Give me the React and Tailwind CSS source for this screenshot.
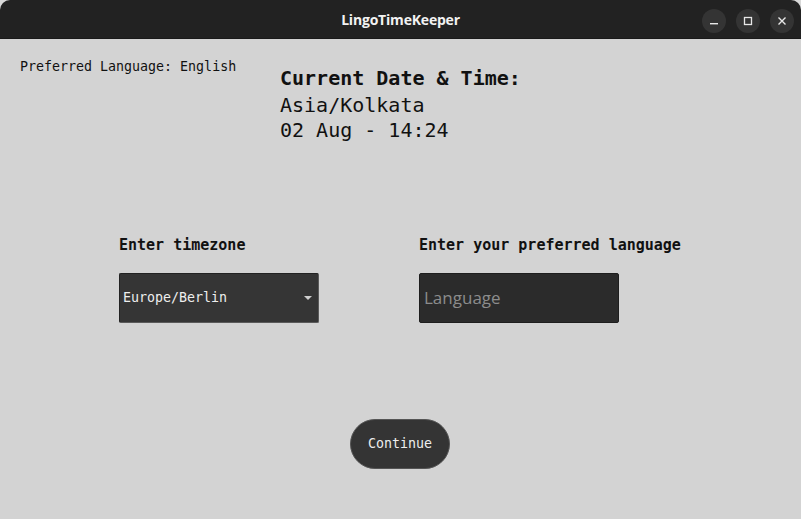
import React from "react";

const mono = { fontFamily: '"DejaVu Sans Mono", "Liberation Mono", monospace' };

const WinButton = ({ children }) => (
  <div className="w-6 h-6 rounded-full bg-[#343434] flex items-center justify-center">
    {children}
  </div>
);

const App = () => {
  return (
    <div className="w-[801px] h-[519px] bg-[#d8d8d8] overflow-hidden">
      <div className="w-full h-full flex flex-col rounded-t-[10px] overflow-hidden bg-[#d3d3d3]">
        {/* title bar */}
        <div className="h-[39px] shrink-0 bg-[#222222] relative flex items-center justify-center border-b border-[#1a1a1a]">
          <span
            className="text-[14px] font-bold text-[#f2f2f2] tracking-[-0.2px]"
            style={{ fontFamily: '"Open Sans", "DejaVu Sans", sans-serif' }}
          >
            LingoTimeKeeper
          </span>
          <div className="absolute right-[7px] top-[9px] flex gap-[10px]">
            <WinButton>
              <svg width="10" height="10" viewBox="0 0 10 10">
                <rect x="1" y="7" width="8" height="1.4" fill="#e8e8e8" />
              </svg>
            </WinButton>
            <WinButton>
              <svg width="10" height="10" viewBox="0 0 10 10">
                <rect x="1.5" y="1.5" width="7" height="7" fill="none" stroke="#e8e8e8" strokeWidth="1.3" />
              </svg>
            </WinButton>
            <WinButton>
              <svg width="10" height="10" viewBox="0 0 10 10">
                <path d="M1.5 1.5 L8.5 8.5 M8.5 1.5 L1.5 8.5" stroke="#e8e8e8" strokeWidth="1.4" />
              </svg>
            </WinButton>
          </div>
        </div>

        {/* content */}
        <div className="flex-1 flex flex-col text-[#111]" style={mono}>
          <div className="flex pt-[19px]">
            <div className="w-[280px] pl-5 text-[13.3px] leading-[18px]">Preferred Language: English</div>
            <div className="pt-[7px]">
              <div className="text-[20px] font-bold leading-[26px]">Current Date &amp; Time:</div>
              <div className="text-[20px] leading-[25px] mt-[2px]">Asia/Kolkata</div>
              <div className="text-[20px] leading-[25px]">02 Aug - 14:24</div>
            </div>
          </div>

          <div className="flex pl-[119px] gap-[100px] mt-[92px]">
            <div className="w-[200px]">
              <div className="text-[15px] font-bold leading-[20px]">Enter timezone</div>
              <div className="mt-[18px] h-[50px] bg-[#353535] border border-[#5a5a5a] border-t-[#222] border-l-[#222] rounded-[2px] flex items-center pl-[3px] pr-[6px]">
                <span className="text-[13.3px] text-[#eeeeee] flex-1">Europe/Berlin</span>
                <svg width="8" height="4" viewBox="0 0 8 4">
                  <path d="M0 0 L8 0 L4 4 Z" fill="#cfcfcf" />
                </svg>
              </div>
            </div>
            <div className="w-[200px]">
              <div className="text-[15px] font-bold leading-[20px] whitespace-nowrap">Enter your preferred language</div>
              <div className="mt-[18px] h-[50px] bg-[#2b2b2b] border border-[#1e1e1e] rounded-[2px] flex items-center pl-[4px]">
                <span
                  className="text-[17px] text-[#8c8c8c]"
                  style={{ fontFamily: '"Open Sans", "DejaVu Sans", sans-serif' }}
                >
                  Language
                </span>
              </div>
            </div>
          </div>

          <div className="flex justify-center mt-[96px] pr-[1px]">
            <button className="w-[100px] h-[50px] rounded-full bg-[#343434] border border-[#555555] text-[13.3px] text-[#eeeeee]" style={mono}>
              Continue
            </button>
          </div>
        </div>
      </div>
    </div>
  );
};

export default App;
